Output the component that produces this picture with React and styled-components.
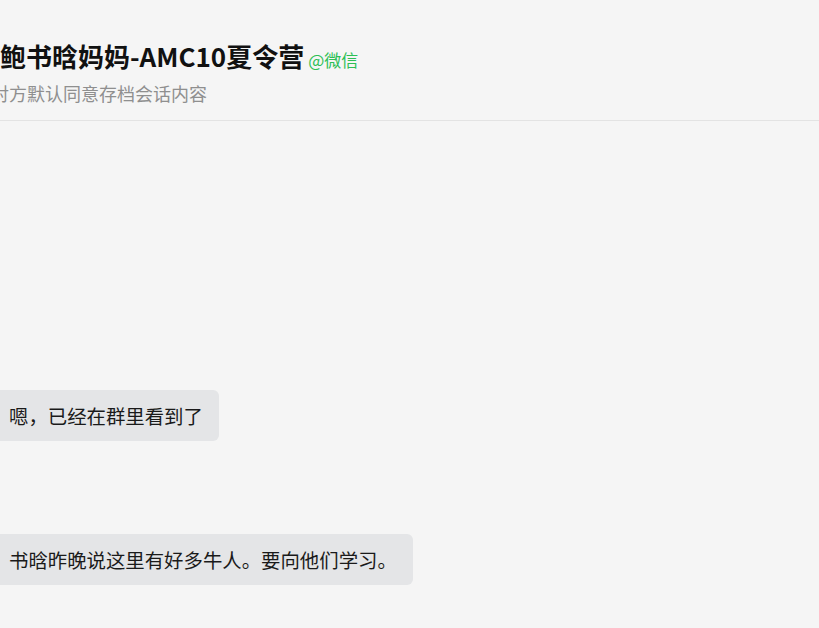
import React from 'react';
import styled, { createGlobalStyle } from 'styled-components';

const GlobalStyle = createGlobalStyle`
  html, body {
    margin: 0;
    padding: 0;
    background: #f5f5f5;
    overflow: hidden;
  }
  body {
    font-family: 'Noto Sans CJK SC', 'Noto Sans', sans-serif;
    color: #1a1a1a;
  }
`

const messages = [
  { id: 1, text: '嗯，已经在群里看到了' },
  { id: 2, text: '书晗昨晚说这里有好多牛人。要向他们学习。' },
];

const App = () => {
  return (
    <>
      <GlobalStyle />
      <ChatWrapper>
        <Header>
          <TitleRow>
            <Title>鲍书晗妈妈-AMC10夏令营</Title>
            <Source>@微信</Source>
          </TitleRow>
          <Notice>对方默认同意存档会话内容</Notice>
        </Header>
        <MessageList>
          {messages.map(msg => (
            <MessageRow key={msg.id}>
              <Bubble>{msg.text}</Bubble>
            </MessageRow>
          ))}
        </MessageList>
      </ChatWrapper>
    </>
  )
};

export default App;

const ChatWrapper = styled.div`
  display: flex;
  flex-direction: column;
  width: 819px;
  height: 628px;
  background: #f5f5f5;
  overflow: hidden;
`

const Header = styled.div`
  display: flex;
  flex-direction: column;
  padding: 38px 0 14px 0;
  border-bottom: 1px solid #e3e3e3;
`

const TitleRow = styled.div`
  display: flex;
  align-items: baseline;
  gap: 4px;
`

const Title = styled.h1`
  margin: 0;
  font-size: 26px;
  line-height: 36px;
  font-weight: 700;
  color: #111;
  white-space: nowrap;
`

const Source = styled.span`
  font-size: 17px;
  color: #2dbf55;
`

const Notice = styled.div`
  margin: 6px 0 0 -9px;
  font-size: 18px;
  line-height: 26px;
  color: #8f8f8f;
  white-space: nowrap;
`

const MessageList = styled.div`
  display: flex;
  flex-direction: column;
  gap: 93px;
  padding-top: 269px;
  margin-left: -7px;
`

const MessageRow = styled.div`
  display: flex;
`

const Bubble = styled.div`
  padding: 11px 16px;
  font-size: 19.4px;
  line-height: 29px;
  color: #1a1a1a;
  background: #e4e5e7;
  border-radius: 6px;
  white-space: nowrap;
`
